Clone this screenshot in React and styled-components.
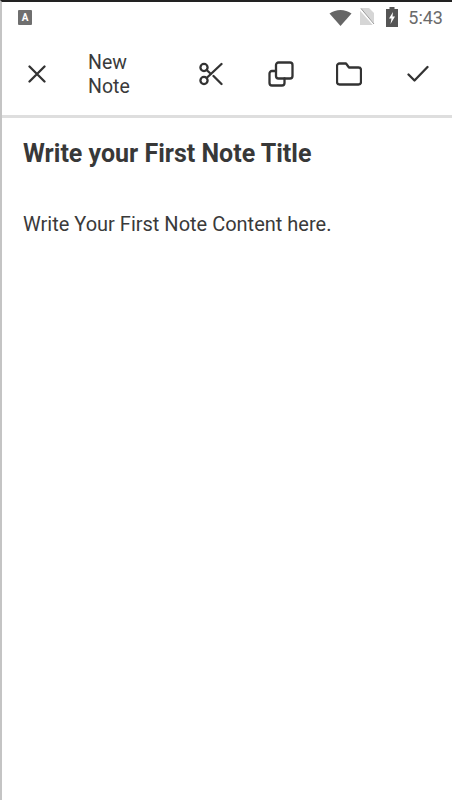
import React from "react";
import styled, { createGlobalStyle } from "styled-components";

const GlobalStyle = createGlobalStyle`
	html, body {
		margin: 0;
		padding: 0;
		background: #fff;
	}
	body {
		font-family: Roboto, "Liberation Sans", sans-serif;
	}
`;

const Screen = styled.div`
	width: 452px;
	height: 800px;
	box-sizing: border-box;
	border-top: 2px solid #222;
	border-left: 2px solid #c4c4c4;
	background: #fff;
	overflow: hidden;
	display: flex;
	flex-direction: column;
`;

const StatusBar = styled.div`
	height: 30px;
	display: flex;
	align-items: center;
	padding: 0 9px 0 16px;
	color: #6b6b6b;
`;

const StatusRight = styled.div`
	margin-left: auto;
	display: flex;
	align-items: center;
`;

const Clock = styled.span`
	font-size: 18px;
	color: #6a6a6a;
	margin-left: 10px;
`;

const Toolbar = styled.div`
	height: 83px;
	display: flex;
	align-items: center;
	padding-left: 22px;
	border-bottom: 3px solid #dedede;
	box-sizing: content-box;
`;

const IconSlot = styled.div`
	display: flex;
	align-items: center;
	justify-content: center;
	width: 26px;
	height: 26px;
	color: #333;
	margin-left: ${(p) => p.$gap || 0}px;
`;

const ToolTitle = styled.div`
	width: 60px;
	margin-left: 38px;
	padding-top: 2px;
	font-size: 19.5px;
	line-height: 24px;
	color: #3a3a3a;
`;

const Body = styled.div`
	padding: 20px 21px 0;
	flex: 1;
`;

const NoteTitle = styled.h1`
	margin: 0;
	font-size: 25px;
	line-height: 32px;
	font-weight: 700;
	color: #383838;
`;

const NoteText = styled.p`
	margin: 42px 0 0;
	font-size: 20px;
	line-height: 24px;
	color: #3a3a3a;
`;

const Stroke = styled.svg`
	fill: none;
	stroke: currentColor;
	stroke-width: 2.3;
	stroke-linecap: round;
	stroke-linejoin: round;
	display: block;
`;

function KeyboardBadge() {
	return (
		<svg width="14" height="15" viewBox="0 0 14 15" style={{ display: "block" }}>
			<rect width="14" height="15" rx="1" fill="#6f6f6f" />
			<text x="7" y="11" textAnchor="middle" fontSize="10" fontWeight="700" fontFamily="Roboto" fill="#fff">A</text>
		</svg>
	);
}

function WifiIcon() {
	return (
		<svg width="23" height="18" viewBox="0 0 23 18" style={{ display: "block" }}>
			<path d="M0.5 5.5 C7 0.8 16 0.8 22.5 5.5 L11.5 18 Z" fill="#666" />
		</svg>
	);
}

function SimIcon() {
	return (
		<svg width="16" height="18" viewBox="0 0 16 18" style={{ marginLeft: 7, display: "block" }}>
			<path d="M1 0 H10 L15 5 V17 H1 Z" fill="#d6d6d6" />
			<path d="M0.5 0.5 L15.5 17.5" stroke="#fff" strokeWidth="2" />
			<path d="M2 0.5 L15 16" stroke="#9a9a9a" strokeWidth="1" />
		</svg>
	);
}

function BatteryIcon() {
	return (
		<svg width="12" height="20" viewBox="0 0 12 20" style={{ marginLeft: 11, display: "block" }}>
			<path d="M3.5 0 H8.5 V2 H12 V20 H0 V2 H3.5 Z" fill="#555" />
			<path d="M7 5 L3 11.5 H5.5 L4.5 17 L9 9.5 H6.5 Z" fill="#fff" />
		</svg>
	);
}

function CloseIcon() {
	return (
		<Stroke width="18" height="18" viewBox="0 0 18 18">
			<path d="M1.5 1.5 L16.5 16.5 M16.5 1.5 L1.5 16.5" />
		</Stroke>
	);
}

function ScissorsIcon() {
	return (
		<Stroke width="24" height="24" viewBox="0 0 24 24">
			<circle cx="5" cy="5.5" r="3.6" />
			<circle cx="5" cy="18.5" r="3.6" />
			<path d="M7.6 8 L12 12 M7.6 16 L22.5 2 M14.5 14 L22.5 22" />
		</Stroke>
	);
}

function CopyIcon() {
	return (
		<Stroke width="26" height="26" viewBox="0 0 26 26">
			<rect x="8" y="1.5" width="16.5" height="16" rx="2.5" />
			<path d="M8 10 H4 A2.5 2.5 0 0 0 1.5 12.5 V22 A2.5 2.5 0 0 0 4 24.5 H14 A2.5 2.5 0 0 0 16.5 22 V17.5" />
		</Stroke>
	);
}

function FolderIcon() {
	return (
		<Stroke width="26" height="24" viewBox="0 0 26 24">
			<path d="M3.5 1.5 H10 L13 5.5 H22.5 A2.5 2.5 0 0 1 25 8 V20 A2.5 2.5 0 0 1 22.5 22.5 H3.5 A2.5 2.5 0 0 1 1 20 V4 A2.5 2.5 0 0 1 3.5 1.5 Z" />
		</Stroke>
	);
}

function CheckIcon() {
	return (
		<Stroke width="22" height="18" viewBox="0 0 22 18">
			<path d="M1.5 9.5 L7.5 15.5 L20.5 2" />
		</Stroke>
	);
}

export default function App() {
	return (
		<>
			<GlobalStyle />
			<Screen>
				<StatusBar>
					<KeyboardBadge />
					<StatusRight>
						<WifiIcon />
						<SimIcon />
						<BatteryIcon />
						<Clock>5:43</Clock>
					</StatusRight>
				</StatusBar>
				<Toolbar>
					<IconSlot><CloseIcon /></IconSlot>
					<ToolTitle>New Note</ToolTitle>
					<IconSlot $gap={50}><ScissorsIcon /></IconSlot>
					<IconSlot $gap={44}><CopyIcon /></IconSlot>
					<IconSlot $gap={42}><FolderIcon /></IconSlot>
					<IconSlot $gap={43}><CheckIcon /></IconSlot>
				</Toolbar>
				<Body>
					<NoteTitle>Write your First Note Title</NoteTitle>
					<NoteText>Write Your First Note Content here.</NoteText>
				</Body>
			</Screen>
		</>
	);
}
